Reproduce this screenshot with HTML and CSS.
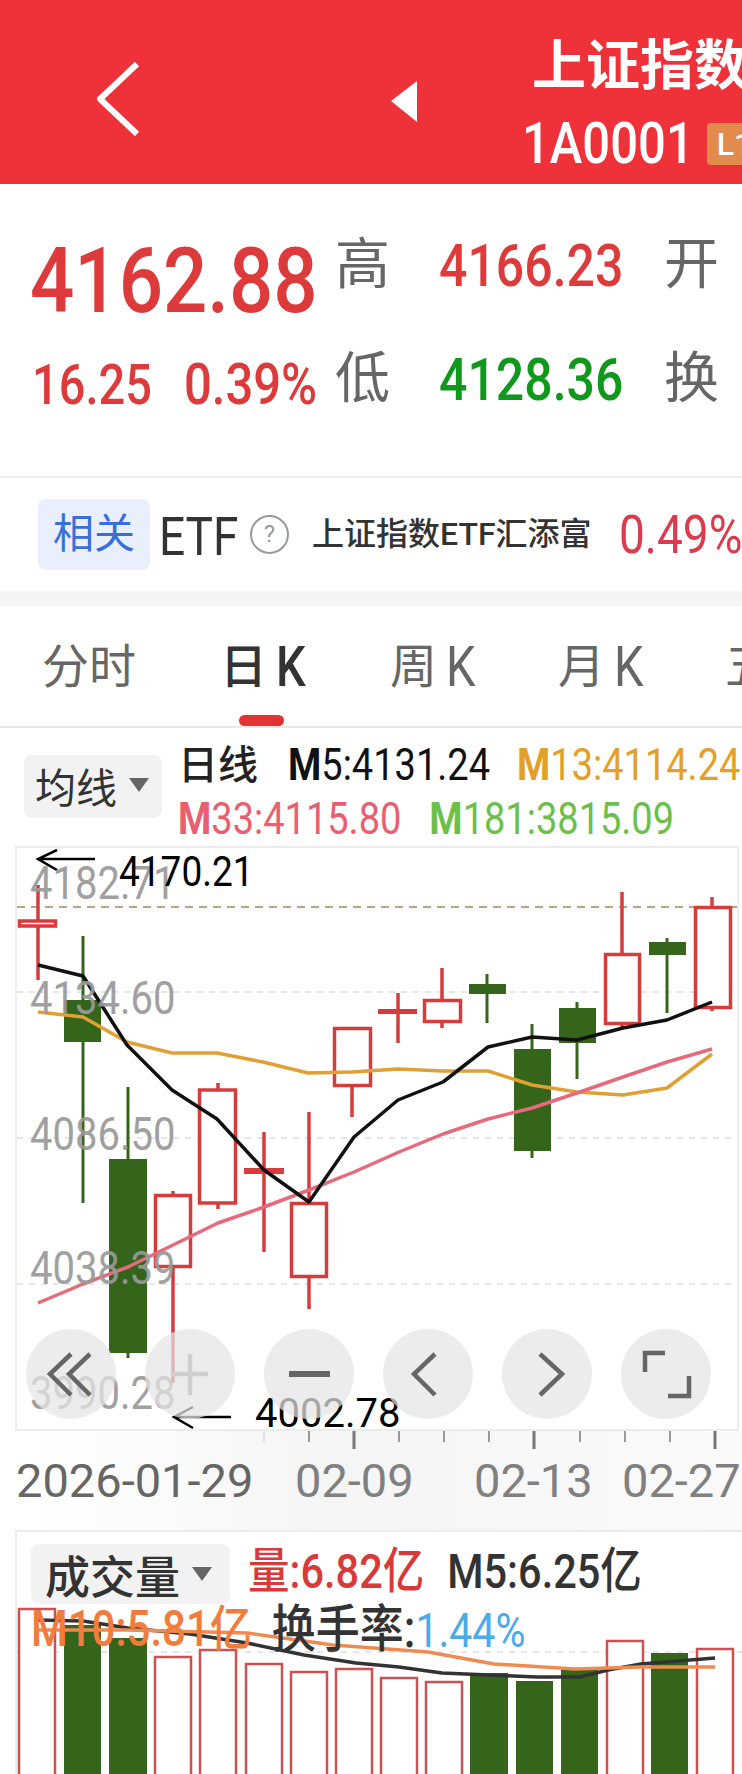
FILE: index.html
```html
<!DOCTYPE html>
<html lang="zh-CN">

<head>
    <meta charset="UTF-8">
    <meta name="viewport" content="width=device-width, initial-scale=1.0">
    <title>上证指数</title>
    <link rel="stylesheet" href="styles.css">
</head>

<body>
    <div class="screen">

        <header class="topbar">
            <svg class="backIcon" viewBox="0 0 44 74"><polyline points="41,2 4,37 41,72" /></svg>
            <svg class="prevIcon" viewBox="0 0 26 41"><polygon points="26,0 0,20 26,41" /></svg>
            <div class="titleBox">
                <div class="titleName">上证指数</div>
                <div class="titleCode"><span class="tall">1A0001</span><span class="levelTag">L1</span></div>
            </div>
        </header>

        <section class="quote">
            <div class="price"><span class="tall">4162.88</span></div>
            <div class="statName">高</div>
            <div class="statValue red"><span class="tall">4166.23</span></div>
            <div class="statName">开</div>

            <div class="change"><span class="tall">16.25</span><span class="tall changePct">0.39%</span></div>
            <div class="statName">低</div>
            <div class="statValue green"><span class="tall">4128.36</span></div>
            <div class="statName">换</div>
        </section>

        <section class="etfRow">
            <div class="etfTag">相关</div>
            <div class="etfWord"><span class="tall">ETF</span></div>
            <div class="helpMark">?</div>
            <div class="etfName">上证指数ETF汇添富</div>
            <div class="etfPct"><span class="tall">0.49%</span></div>
        </section>

        <div class="band"></div>

        <nav class="tabs">
            <div class="tab tab1">分时</div>
            <div class="tab tab2 active">日<span class="tall tabK">K</span></div>
            <div class="tab tab3">周<span class="tall tabK">K</span></div>
            <div class="tab tab4">月<span class="tall tabK">K</span></div>
            <div class="tab tab5">五日</div>
            <div class="tabLine"></div>
        </nav>

        <section class="legendRow">
            <div class="pickBtn maPick">均线<i class="caret"></i></div>
            <div class="legend">
                <div class="legendLine">
                    <span class="legendTitle">日线</span>
                    <span class="tall ma5"><b>M</b>5:4131.24</span>
                    <span class="tall ma13"><b>M</b>13:4114.24</span>
                </div>
                <div class="legendLine second">
                    <span class="tall ma33"><b>M</b>33:4115.80</span>
                    <span class="tall ma181"><b>M</b>181:3815.09</span>
                </div>
            </div>
        </section>

        <section class="chart">
            <svg class="chartSvg" viewBox="0 846 742 585">
                <rect class="frame" x="16" y="847" width="722" height="583" />
                <line class="refLine" x1="17" y1="907" x2="737" y2="907" />
                <line class="grid" x1="17" y1="992" x2="737" y2="992" />
                <line class="grid" x1="17" y1="1138" x2="737" y2="1138" />
                <line class="grid" x1="17" y1="1284" x2="737" y2="1284" />

                <!-- candles, oldest on the left -->
                <g class="up">
                    <line x1="38" y1="885" x2="38" y2="980" /><rect x="19.5" y="921" width="36" height="5" />
                    <line x1="173" y1="1191" x2="173" y2="1383" /><rect x="155.5" y="1195.5" width="35" height="71" />
                    <line x1="218" y1="1083" x2="218" y2="1209" /><rect x="199.5" y="1090" width="36" height="113" />
                    <line x1="264" y1="1132" x2="264" y2="1252" /><rect class="solid" x="244" y="1168" width="40" height="6" />
                    <line x1="309" y1="1112" x2="309" y2="1309" /><rect x="291.5" y="1203.5" width="35" height="73" />
                    <line x1="352" y1="1027" x2="352" y2="1117" /><rect x="334.5" y="1028.5" width="36" height="57" />
                    <line x1="398" y1="993" x2="398" y2="1043" /><rect class="solid" x="378" y="1009" width="39" height="5" />
                    <line x1="442" y1="968" x2="442" y2="1028" /><rect x="424.5" y="1000.5" width="36" height="21" />
                    <line x1="622" y1="892" x2="622" y2="1028" /><rect x="605.5" y="954.5" width="34" height="69" />
                    <line x1="712" y1="897" x2="712" y2="1011" /><rect x="695.5" y="907.5" width="35" height="100" />
                </g>
                <g class="down">
                    <line x1="83" y1="936" x2="83" y2="1203" /><rect x="64" y="1000" width="37" height="42" />
                    <line x1="128" y1="1087" x2="128" y2="1358" /><rect x="109" y="1159" width="38" height="194" />
                    <line x1="487" y1="974" x2="487" y2="1023" /><rect x="469" y="984" width="37" height="10" />
                    <line x1="532" y1="1024" x2="532" y2="1158" /><rect x="514" y="1049" width="37" height="102" />
                    <line x1="577" y1="1002" x2="577" y2="1079" /><rect x="559" y="1008" width="37" height="35" />
                    <line x1="667" y1="938" x2="667" y2="1013" /><rect x="649" y="942" width="37" height="13" />
                </g>

                <polyline class="lineM13" points="38,1012 83,1017 127,1042 172,1053 217,1053 263,1062 308,1073 352,1072 398,1069 443,1071 488,1071 532,1085 577,1092 623,1095 667,1088 712,1054" />
                <polyline class="lineM33" points="38,1303 83,1284 128,1267 173,1245 218,1223 264,1207 309,1190 354,1172 399,1152 443,1134 488,1119 532,1108 577,1093 623,1077 667,1062 712,1049" />
                <polyline class="lineM5" points="38,965 83,976 127,1045 172,1090 217,1119 264,1170 309,1202 354,1137 398,1100 443,1082 488,1047 532,1037 577,1040 623,1028 667,1020 712,1002" />

                <path class="arrow" d="M95 859H38M57 850L38 859L57 870" />
                <path class="arrow" d="M231 1417H174M193 1407L174 1417L193 1428" />
            </svg>

            <div class="axisLabel lab1"><span class="tall">4182.71</span></div>
            <div class="axisLabel lab2"><span class="tall">4134.60</span></div>
            <div class="axisLabel lab3"><span class="tall">4086.50</span></div>
            <div class="axisLabel lab4"><span class="tall">4038.39</span></div>
            <div class="axisLabel lab5"><span class="tall">3990.28</span></div>

            <div class="extreme highMark"><span class="tall">4170.21</span></div>
            <div class="extreme lowMark">4002.78</div>

            <div class="chartBtns">
                <div class="roundBtn"><svg viewBox="0 0 90 90"><polyline points="45,25 24,45 45,66" /><polyline points="64,25 43,45 64,66" /></svg></div>
                <div class="roundBtn off"><svg viewBox="0 0 90 90"><path d="M45 25V66M27 45H63" /></svg></div>
                <div class="roundBtn"><svg viewBox="0 0 90 90"><path class="thick" d="M25 45H66" /></svg></div>
                <div class="roundBtn"><svg viewBox="0 0 90 90"><polyline points="52,25 31,45 52,66" /></svg></div>
                <div class="roundBtn"><svg viewBox="0 0 90 90"><polyline points="38,25 60,45 38,66" /></svg></div>
                <div class="roundBtn"><svg viewBox="0 0 90 90"><polyline points="44,24 24,24 24,43" /><polyline points="47,67 68,67 68,47" /></svg></div>
            </div>
        </section>

        <section class="dates">
            <svg class="ticks" viewBox="0 0 742 20">
                <path class="tickSmall faint" d="M264 0V11" />
                <path class="tickSmall" d="M309 0V11M399 0V11M444 0V11M489 0V11M580 0V11M625 0V11M670 0V11" />
                <path class="tickBig" d="M354 0V18M534 0V18M715 0V18" />
            </svg>
            <div class="dateRow">
                <span class="firstDate">2026-01-29</span>
                <span>02-09</span>
                <span>02-13</span>
                <span>02-27</span>
            </div>
        </section>

        <section class="volume">
            <svg class="chartSvg" viewBox="0 1530 742 244">
                <path class="frame" d="M16 1774V1531H742" />
                <line class="grid" x1="17" y1="1652" x2="742" y2="1652" />
                <g class="volUp">
                    <rect x="19" y="1609" width="36" height="170" />
                    <rect x="155" y="1657" width="36" height="120" />
                    <rect x="200" y="1650" width="36" height="130" />
                    <rect x="246" y="1664" width="36" height="120" />
                    <rect x="291" y="1672" width="36" height="110" />
                    <rect x="336" y="1669" width="36" height="110" />
                    <rect x="381" y="1678" width="36" height="100" />
                    <rect x="426" y="1682" width="36" height="100" />
                    <rect x="607" y="1641" width="36" height="140" />
                    <rect x="697" y="1649" width="36" height="130" />
                </g>
                <g class="volDown">
                    <rect x="64" y="1625" width="37" height="150" />
                    <rect x="109" y="1638" width="38" height="140" />
                    <rect x="470" y="1673" width="38" height="110" />
                    <rect x="516" y="1681" width="37" height="100" />
                    <rect x="561" y="1670" width="37" height="110" />
                    <rect x="651" y="1653" width="37" height="130" />
                </g>
                <polyline class="volM5" points="38,1620 83,1621 128,1628 190,1634 247,1643 304,1655 356,1663 399,1667 442,1673 489,1675 537,1677 580,1677 608,1670 641,1664 715,1658" />
                <polyline class="volM10" points="38,1630 128,1630 247,1633 333,1645 428,1652 494,1664 575,1669 641,1667 715,1667" />
            </svg>

            <div class="volHead">
                <div class="pickBtn volPick">成交量<i class="caret"></i></div>
                <div class="volLine one">
                    <span class="tall volRed">量:6.82亿</span>
                    <span class="tall volDark">M5:6.25亿</span>
                </div>
                <div class="volLine two">
                    <span class="tall volOrange">M10:5.81亿</span>
                    <span class="tall volRate">换手率:<em>1.44%</em></span>
                </div>
            </div>
        </section>

    </div>
</body>

</html>
```
FILE: styles.css
```css
html,
body {
    margin: 0;
    background-color: #ffffff;
    overflow: hidden;
}

.screen {
    width: 742px;
    height: 1774px;
    overflow: hidden;
    font-family: Roboto, "Noto Sans CJK SC", sans-serif;
}

.tall {
    display: inline-block;
    transform: scaleY(1.17);
}

.red {
    color: #dd3a3c;
}

.green {
    color: #0f981b;
}

/* top bar */
.topbar {
    height: 184px;
    box-sizing: border-box;
    padding-left: 96px;
    background-color: #ef323a;
    display: flex;
    align-items: flex-start;
    overflow: hidden;
    color: #ffffff;
}

.backIcon {
    width: 44px;
    height: 74px;
    margin-top: 62px;
    flex: none;
}

.backIcon polyline {
    fill: none;
    stroke: #ffffff;
    stroke-width: 6;
    stroke-linejoin: round;
}

.prevIcon {
    width: 26px;
    height: 41px;
    margin: 81px 0 0 251px;
    flex: none;
    fill: #ffffff;
}

.titleBox {
    margin-left: 105px;
    flex: none;
    width: 300px;
}

.titleName {
    margin: 38px 0 0 10px;
    font-size: 54px;
    line-height: 58px;
    font-weight: 700;
}

.titleCode {
    display: flex;
    align-items: center;
    margin-top: 27px;
    font-size: 49px;
    font-weight: 500;
    line-height: 42px;
}

.levelTag {
    margin-left: 13px;
    width: 60px;
    height: 42px;
    box-sizing: border-box;
    padding-left: 10px;
    border-radius: 4px;
    background-color: #e38b4d;
    font-size: 32px;
    font-weight: 500;
    line-height: 42px;
}

/* price block */
.quote {
    height: 294px;
    box-sizing: border-box;
    padding: 48px 0 0 30px;
    border-bottom: 2px solid #eeeeee;
    display: grid;
    grid-template-columns: 305px 104px 225px auto;
    grid-template-rows: 64px 56px;
    row-gap: 50px;
}

.price {
    font-size: 78px;
    font-weight: 500;
    line-height: 64px;
    margin-top: 18px;
    color: #dd3a3c;
    white-space: nowrap;
}

.statName {
    font-size: 55px;
    line-height: 64px;
    color: #666666;
}

.statValue {
    font-size: 50px;
    font-weight: 500;
    line-height: 64px;
    margin-top: 2px;
}

.change {
    display: flex;
    gap: 32px;
    padding-left: 2px;
    font-size: 47px;
    line-height: 64px;
    font-weight: 500;
    color: #dd3a3c;
    white-space: nowrap;
    margin-top: 6px;
}

.changePct {
    font-size: 49px;
}

/* related etf */
.etfRow {
    height: 113px;
    box-sizing: border-box;
    padding: 21px 0 0 38px;
    display: flex;
    align-items: flex-start;
    white-space: nowrap;
}

.etfTag {
    width: 112px;
    height: 71px;
    flex: none;
    border-radius: 8px;
    background-color: #e9effc;
    color: #3a6fd8;
    font-size: 41px;
    line-height: 71px;
    text-align: center;
}

.etfWord {
    margin: 2px 0 0 9px;
    font-size: 46px;
    line-height: 71px;
    color: #333333;
    width: 80px;
    flex: none;
}

.helpMark {
    width: 39px;
    height: 39px;
    flex: none;
    box-sizing: border-box;
    margin: 16px 0 0 11px;
    border: 2px solid #999999;
    border-radius: 50%;
    color: #999999;
    font-size: 24px;
    line-height: 35px;
    text-align: center;
}

.etfName {
    margin: 0 0 0 23px;
    width: 307px;
    flex: none;
    font-size: 32px;
    line-height: 71px;
    font-weight: 500;
    color: #333333;
}

.etfPct {
    font-size: 46px;
    line-height: 70px;
    color: #dc3b4f;
}

.band {
    height: 15px;
    background-color: #f4f4f4;
}

/* period tabs */
.tabs {
    height: 120px;
    position: relative;
    border-bottom: 2px solid #e8e8e8;
    box-sizing: content-box;
    white-space: nowrap;
    overflow: hidden;
}

.tab {
    position: absolute;
    top: 33px;
    font-size: 47px;
    line-height: 56px;
    color: #666666;
}

.tab1 {
    left: 42px;
}

.tab2 {
    left: 220px;
    color: #333333;
    font-weight: 500;
}

.tab3 {
    left: 390px;
}

.tab4 {
    left: 558px;
}

.tab5 {
    left: 725px;
}

.tabK {
    margin-left: 9px;
}

.tabLine {
    position: absolute;
    left: 239px;
    bottom: 0;
    width: 45px;
    height: 11px;
    border-radius: 6px;
    background-color: #e33232;
}

/* moving average legend */
.legendRow {
    height: 118px;
    box-sizing: border-box;
    padding-left: 24px;
    display: flex;
    align-items: flex-start;
    white-space: nowrap;
}

.pickBtn {
    display: flex;
    align-items: center;
    box-sizing: border-box;
    border-radius: 8px;
    background-color: #f2f2f2;
    color: #333333;
}

.maPick {
    width: 138px;
    height: 63px;
    margin-top: 27px;
    padding-left: 11px;
    padding-bottom: 4px;
    font-size: 41px;
}

.caret {
    width: 0;
    height: 0;
    margin-left: 12px;
    border-style: solid;
    border-width: 14px 10px 0 10px;
    border-color: #666666 transparent transparent transparent;
}

.legend {
    margin-left: 16px;
    font-size: 38px;
}

.legendLine {
    display: flex;
    align-items: center;
    height: 44px;
    margin-top: 15px;
}

.legendLine.second {
    margin-top: 10px;
}

.legendLine b {
    font-weight: 700;
}

.legendTitle {
    font-size: 40px;
    font-weight: 500;
    color: #222222;
    margin: 0 30px 6px 0;
}

.ma5 {
    color: #111111;
    margin-right: 27px;
}

.ma13 {
    color: #e2a02a;
}

.ma33 {
    color: #e8606f;
    margin-right: 28px;
}

.ma181 {
    color: #6cbf4b;
}

/* kline chart */
.chart,
.volume {
    position: relative;
}

.chart {
    height: 585px;
}

.chartSvg {
    display: block;
    width: 742px;
    height: 100%;
}

.frame {
    fill: none;
    stroke: #ececec;
    stroke-width: 2;
}

.refLine {
    stroke: #b9a585;
    stroke-width: 2;
    stroke-dasharray: 8 6;
}

.grid {
    stroke: #dedede;
    stroke-width: 1.5;
    stroke-dasharray: 6 6;
}

.up line,
.up rect {
    stroke: #d63c3c;
    stroke-width: 3.5;
}

.up rect {
    fill: #ffffff;
}

.up rect.solid {
    fill: #d63c3c;
    stroke: none;
}

.down line {
    stroke: #34651a;
    stroke-width: 3;
}

.down rect {
    fill: #34651a;
}

.lineM5,
.lineM13,
.lineM33,
.volM5,
.volM10 {
    fill: none;
    stroke-width: 3.5;
    stroke-linejoin: round;
}

.lineM5 {
    stroke: #111111;
}

.lineM13 {
    stroke: #e0a033;
}

.lineM33 {
    stroke: #e66a7c;
}

.arrow {
    fill: none;
    stroke: #000000;
    stroke-width: 2.5;
}

.axisLabel {
    position: absolute;
    left: 30px;
    font-size: 40px;
    line-height: 32px;
    color: #999999;
    opacity: .92;
}

.lab1 {
    top: 22px;
}

.lab2 {
    top: 137px;
}

.lab3 {
    top: 273px;
}

.lab4 {
    top: 407px;
}

.lab5 {
    top: 532px;
}

.extreme {
    position: absolute;
    line-height: 30px;
    color: #000000;
}

.highMark {
    left: 119px;
    top: 11px;
    font-size: 37px;
}

.lowMark {
    left: 255px;
    top: 553px;
    font-size: 40px;
}

.chartBtns {
    position: absolute;
    left: 26px;
    top: 483px;
    display: flex;
    gap: 29px;
}

.roundBtn {
    width: 90px;
    height: 90px;
    border-radius: 50%;
    background-color: rgba(228, 228, 228, .72);
}

.roundBtn svg {
    display: block;
    width: 90px;
    height: 90px;
    fill: none;
    stroke: #666666;
    stroke-width: 4.5;
}

.roundBtn .thick {
    stroke-width: 6;
}

.roundBtn.off svg {
    stroke: #cfcfcf;
}

/* date axis */
.dates {
    height: 99px;
    background: linear-gradient(90deg, #ffffff 4%, #f5f5f5 45%, #fafafa 100%);
}

.ticks {
    display: block;
    width: 742px;
    height: 20px;
}

.tickSmall {
    fill: none;
    stroke: #999999;
    stroke-width: 2;
}

.tickSmall.faint {
    stroke: #e2e2e2;
}

.tickBig {
    fill: none;
    stroke: #777777;
    stroke-width: 3;
}

.dateRow {
    display: grid;
    grid-template-columns: 279px 179px 148px auto;
    padding: 14px 0 0 16px;
    font-size: 47px;
    line-height: 32px;
    color: #808080;
    white-space: nowrap;
}

.firstDate {
    color: #666666;
}

/* volume */
.volume {
    height: 244px;
}

.volUp rect {
    fill: #ffffff;
    stroke: #cf5050;
    stroke-width: 2.5;
}

.volDown rect {
    fill: #34651a;
}

.volM5 {
    stroke: #333333;
}

.volM10 {
    stroke: #ef8a52;
    stroke-width: 3.5;
}

.volHead {
    position: absolute;
    left: 0;
    top: 0;
    white-space: nowrap;
}

.volPick {
    position: absolute;
    left: 31px;
    top: 14px;
    width: 199px;
    height: 60px;
    padding-left: 14px;
    font-size: 45px;
    font-weight: 500;
}

.volPick .caret {
    margin-left: 12px;
}

.volLine {
    position: absolute;
    display: flex;
    font-size: 41.5px;
    font-weight: 500;
    line-height: 44px;
}

.volLine.one {
    left: 248px;
    top: 20px;
    gap: 23px;
}

.volLine.two {
    left: 31px;
    top: 78px;
    gap: 20px;
}

.volRed {
    color: #d83a3a;
}

.volDark {
    color: #333333;
}

.volOrange {
    color: #f07c3e;
    font-size: 42px;
}

.volRate {
    color: #333333;
    font-size: 44px;
    font-weight: 500;
}

.volRate em {
    font-size: 41px;
    font-style: normal;
    font-weight: 400;
    color: #4aabe8;
}
```
